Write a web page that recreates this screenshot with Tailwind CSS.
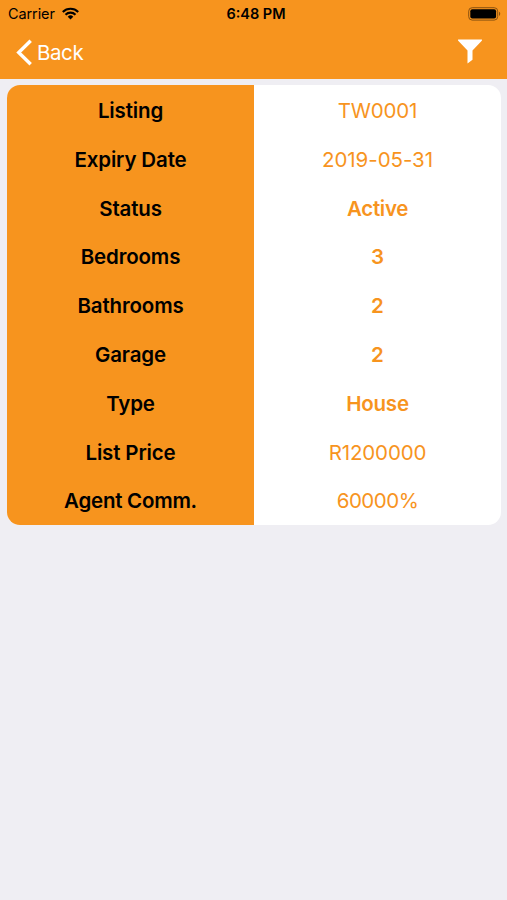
<!DOCTYPE html>
<html lang="en">
<head>
<meta charset="utf-8">
<title>Listing</title>
<script src="https://cdn.jsdelivr.net/npm/@tailwindcss/browser@4"></script>
</head>
<body class="min-h-screen bg-[#efeef3] font-['Inter',sans-serif] antialiased">
<header class="h-[79px] bg-[#f7941e]">
  <div class="grid h-7 grid-cols-3 items-center pl-2 pr-1.5 text-black">
    <div class="flex items-center gap-[7px]">
      <span class="text-[14.5px] tracking-[-0.1px]">Carrier</span>
      <svg class="-mt-px h-[13px] w-[17px]" viewBox="0 0 17 13" fill="none" stroke="currentColor" stroke-width="2.1"><path d="M.8 4.9a10.9 10.9 0 0 1 15.4 0M3.5 7.7a7.1 7.1 0 0 1 10 0"/><path d="M8.500 12.500 5.700 9.700a4 4 0 0 1 5.600 0z" fill="currentColor" stroke="none"/></svg>
    </div>
    <span class="pl-[3px] text-center text-[14.500px] font-semibold">6:48 PM</span>
    <svg class="-mt-px h-[14px] w-[33px] justify-self-end" viewBox="0 0 33 14"><rect x=".7" y=".7" width="29" height="12.400" rx="3.500" fill="none" stroke="#8a5210" stroke-width="1"/><rect x="2.300" y="2.300" width="25.800" height="9.200" rx="2" fill="#000"/><path d="M31 4.800v4.200c1.700-.7 1.700-3.500 0-4.200z" fill="#8a5210"/></svg>
  </div>
  <div class="flex h-12 items-center justify-between pl-4 pr-6 pt-px text-white">
    <div class="flex items-center gap-[5px]">
      <svg class="h-[27px] w-4" viewBox="0 0 16 27" fill="none" stroke="currentColor" stroke-width="3.400"><path d="M14.700 1.700 2.700 13.500l12 11.800"/></svg>
      <span class="pt-0.5 text-[20.500px] tracking-[-0.4px]">Back</span>
    </div>
    <svg class="-mt-0.5 h-[25px] w-[26px]" viewBox="0 0 26 25" fill="currentColor"><path d="M1.500.5h23c.6 0 .7.7.3 1.200L15.500 11.500v9.200L10.500 24.500V11.500L1.200 1.700C.8 1.200.9.500 1.500.5z"/></svg>
  </div>
</header>
<main class="ml-[7px] mr-1.5 mt-1.5 grid h-[440px] grid-cols-2 overflow-hidden rounded-[13px] bg-white text-center text-[20.500px]">
  <div class="grid auto-rows-[48.8px] items-center bg-[#f7941e] pt-[2px] font-semibold tracking-[-0.15px] text-black">
    <div>Listing</div><div>Expiry Date</div><div>Status</div><div>Bedrooms</div><div>Bathrooms</div><div>Garage</div><div>Type</div><div>List Price</div><div class="tracking-[-0.25px]">Agent Comm.</div>
  </div>
  <div class="grid auto-rows-[48.8px] items-center pt-[2px] text-[#f7941e]">
    <div class="tracking-[-0.2px]">TW0001</div><div class="tracking-[-0.05px]">2019-05-31</div><div class="font-semibold tracking-[-0.3px]">Active</div><div class="font-semibold">3</div><div class="font-semibold">2</div><div class="font-semibold">2</div><div class="font-semibold tracking-[-0.2px]">House</div><div class="tracking-[-0.15px]">R1200000</div><div class="tracking-[-0.5px]">60000%</div>
  </div>
</main>
</body>
</html>
